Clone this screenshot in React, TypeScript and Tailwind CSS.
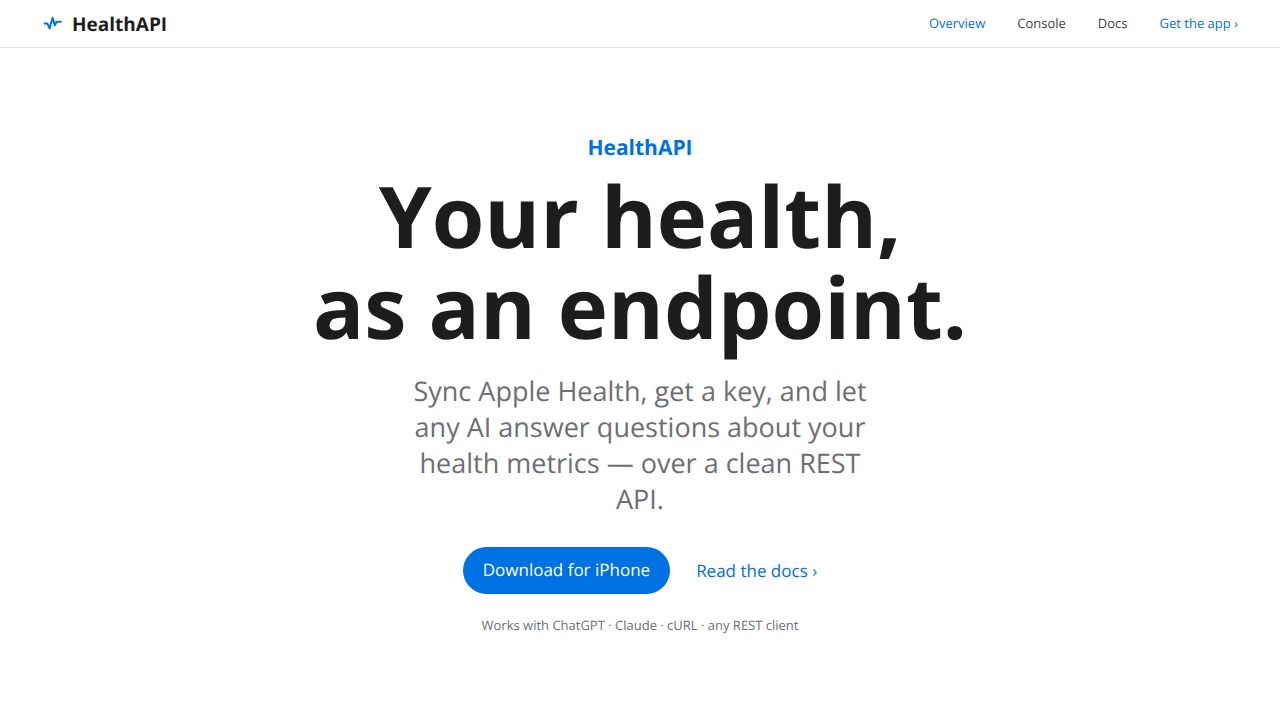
import React from 'react';

interface NavItem {
  label: string;
  href: string;
  accent?: boolean;
}

const NAV_ITEMS: NavItem[] = [
  { label: 'Overview', href: '#overview', accent: true },
  { label: 'Console', href: '#console' },
  { label: 'Docs', href: '#docs' },
  { label: 'Get the app ›', href: '#app', accent: true },
];

const PulseIcon: React.FC = () => (
  <svg
    className="w-5 h-5"
    viewBox="0 0 20 20"
    fill="none"
    stroke="currentColor"
    strokeWidth="2"
    strokeLinecap="round"
    strokeLinejoin="round"
    aria-hidden="true"
  >
    <path d="M2.6 9.6h2.8l2.2 4.8L10.6 3.8l2.3 7.4 1.7-3.4h4.2" />
  </svg>
);

const Header: React.FC = () => (
  <header className="flex items-center justify-between h-12 px-[42px] border-b border-[#e0e0e2]">
    <a href="#overview" className="flex items-center gap-2.5 text-[19px] leading-6 font-bold">
      <span className="text-[#0071e3]">
        <PulseIcon />
      </span>
      HealthAPI
    </a>
    <nav className="flex items-center gap-8 text-[13px]">
      {NAV_ITEMS.map((item) => (
        <a
          key={item.label}
          href={item.href}
          className={item.accent ? 'text-[#0071e3]' : 'text-[#424245]'}
        >
          {item.label}
        </a>
      ))}
    </nav>
  </header>
);

const Hero: React.FC = () => (
  <section className="flex flex-col items-center px-6 pt-[86px] pb-20 text-center">
    <p className="text-[21px] leading-7 font-bold text-[#0071e3]">HealthAPI</p>
    <h1 className="mt-2 text-[85px] leading-[91px] font-bold">
      Your health,
      <br />
      as an endpoint.
    </h1>
    <p className="mt-[21px] max-w-[480px] text-[27px] leading-9 text-[#6e6e73]">
      Sync Apple Health, get a key, and let any AI answer questions about your health metrics — over
      a clean REST API.
    </p>
    <div className="flex flex-wrap items-center justify-center gap-[26px] mt-[30px]">
      <a
        href="#download"
        className="px-5 pt-[10px] pb-3 rounded-full bg-[#0071e3] text-[17px] leading-[25px] text-white"
      >
        Download for iPhone
      </a>
      <a href="#docs" className="text-[17px] leading-[25px] text-[#0071e3]">
        Read the docs ›
      </a>
    </div>
    <p className="mt-[21px] text-[13px] leading-5 text-[#6e6e73]">
      Works with ChatGPT · Claude · cURL · any REST client
    </p>
  </section>
);

const App: React.FC = () => (
  <div className="min-h-screen bg-white font-['Open_Sans',sans-serif] text-[#1d1d1f] antialiased [text-rendering:geometricPrecision]">
    <Header />
    <main>
      <Hero />
    </main>
  </div>
);

export default App;
